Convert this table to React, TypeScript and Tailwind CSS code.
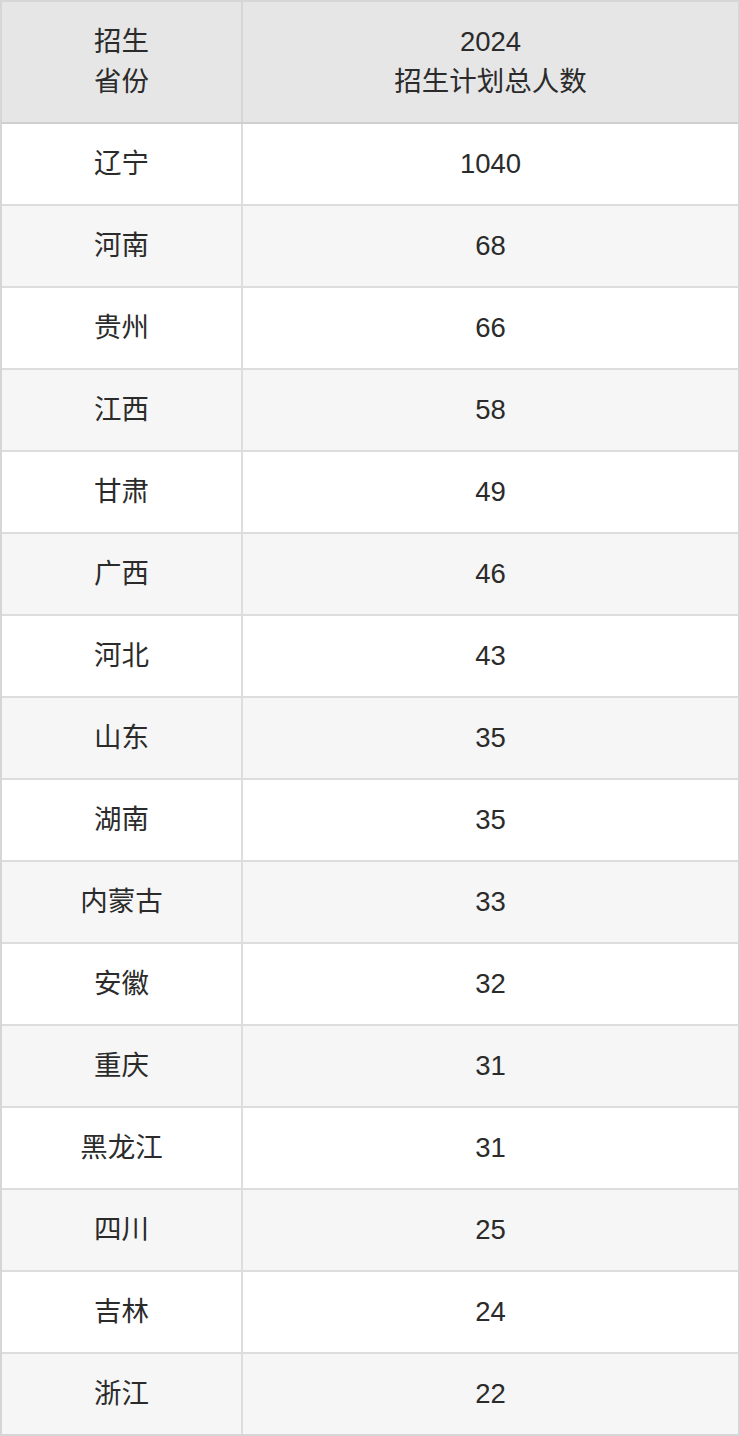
import React from 'react';

const rows: [string, string][] = [
  ['辽宁', '1040'],
  ['河南', '68'],
  ['贵州', '66'],
  ['江西', '58'],
  ['甘肃', '49'],
  ['广西', '46'],
  ['河北', '43'],
  ['山东', '35'],
  ['湖南', '35'],
  ['内蒙古', '33'],
  ['安徽', '32'],
  ['重庆', '31'],
  ['黑龙江', '31'],
  ['四川', '25'],
  ['吉林', '24'],
  ['浙江', '22'],
];

const font = { fontFamily: "'Liberation Sans', 'Noto Sans CJK SC', sans-serif" };

const App: React.FC = () => {
  return (
    <div className="w-[740px] bg-white text-[27.5px] text-[#2b2b2b]" style={font}>
      <div className="border-2 border-[#d6d6d6]">
        {/* header */}
        <div className="flex h-[122px] border-b-2 border-[#cfcfcf] bg-[#e6e6e6] leading-[40px]">
          <div className="flex w-[241px] flex-col items-center justify-center border-r-2 border-[#d6d6d6] text-center">
            <span>招生</span>
            <span>省份</span>
          </div>
          <div className="flex flex-1 flex-col items-center justify-center text-center">
            <span>2024</span>
            <span>招生计划总人数</span>
          </div>
        </div>
        {/* body */}
        {rows.map(([prov, num], i) => (
          <div
            key={prov}
            className={`flex h-[80px] box-content ${i > 0 ? 'border-t-2 border-[#dddddd]' : ''} ${i % 2 === 1 ? 'bg-[#f6f6f6]' : 'bg-white'}`}
          >
            <div className="flex w-[241px] items-center justify-center border-r-2 border-[#dddddd]">{prov}</div>
            <div className="flex flex-1 items-center justify-center">{num}</div>
          </div>
        ))}
      </div>
    </div>
  );
};

export default App;
